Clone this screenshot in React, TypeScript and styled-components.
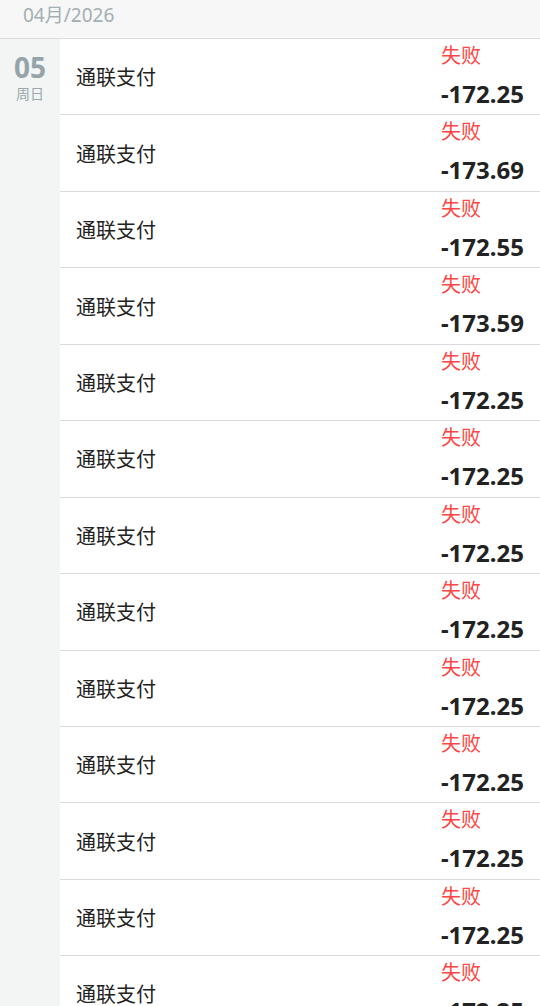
import styled, { createGlobalStyle } from 'styled-components';

const GlobalStyle = createGlobalStyle`
  html, body {
    margin: 0;
    padding: 0;
    background: #ffffff;
    font-family: "Noto Sans", "Noto Sans CJK SC", sans-serif;
  }
`;

const Page = styled.div`
  width: 540px;
  overflow: hidden;
`;

const MonthBar = styled.div`
  height: 39px;
  box-sizing: border-box;
  padding: 2px 0 0 23px;
  line-height: 26px;
  background: #f7f7f7;
  border-bottom: 1px solid #dcdce2;
  color: #a3afb3;
  font-size: 19px;
`;

const DayGroup = styled.div`
  display: flex;
`;

const DateColumn = styled.div`
  width: 60px;
  flex-shrink: 0;
  background: #f3f5f4;
  display: flex;
  flex-direction: column;
  align-items: center;
  gap: 6px;
  padding-top: 15px;
`;

const DayNumber = styled.div`
  font-size: 28px;
  font-weight: 700;
  line-height: 26px;
  color: #95a4aa;
`;

const WeekDay = styled.div`
  font-size: 14px;
  line-height: 16px;
  color: #9aa8ad;
`;

const List = styled.div`
  flex: 1;
`;

const Row = styled.div`
  height: 76.45px;
  box-sizing: border-box;
  display: flex;
  align-items: center;
  justify-content: space-between;
  padding: 0 16px;
  border-bottom: 1px solid #d9d9df;
`;

const Title = styled.div`
  font-size: 20px;
  color: #222222;
`;

const Side = styled.div`
  align-self: stretch;
  display: flex;
  flex-direction: column;
`;

const Status = styled.div<{ $failed?: boolean }>`
  font-size: 20px;
  line-height: 34px;
  color: ${({ $failed }) => ($failed ? '#ff4646' : '#2bb36a')};
`;

const Amount = styled.div`
  font-size: 24px;
  line-height: 42px;
  font-weight: 700;
  color: #222222;
`;

const amounts = [
  '-172.25', '-173.69', '-172.55', '-173.59', '-172.25', '-172.25', '-172.25',
  '-172.25', '-172.25', '-172.25', '-172.25', '-172.25', '-172.25',
];

export default function App() {
  return (
    <Page>
      <GlobalStyle />
      <MonthBar>04月/2026</MonthBar>
      <DayGroup>
        <DateColumn>
          <DayNumber>05</DayNumber>
          <WeekDay>周日</WeekDay>
        </DateColumn>
        <List>
          {amounts.map((amount, i) => (
            <Row key={i}>
              <Title>通联支付</Title>
              <Side>
                <Status $failed>失败</Status>
                <Amount>{amount}</Amount>
              </Side>
            </Row>
          ))}
        </List>
      </DayGroup>
    </Page>
  );
}
